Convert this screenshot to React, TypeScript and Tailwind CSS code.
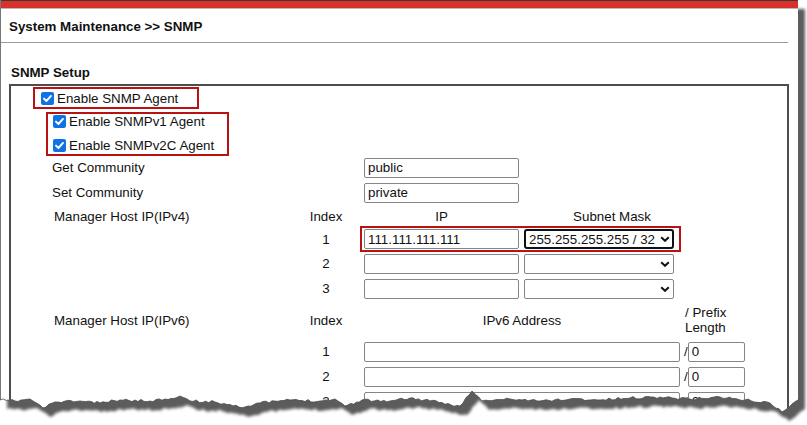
import React from 'react';

// Torn bottom edge of the screenshot: key points, jittered in between
const tearKeys: [number, number][] = [
  [0, 400], [15, 401], [30, 399], [43, 408], [55, 402], [80, 401], [100, 403], [120, 400],
  [150, 401], [165, 399], [180, 396], [190, 401], [215, 402], [245, 407], [260, 403],
  [290, 400], [320, 401], [335, 399], [345, 406], [362, 400], [390, 401], [410, 398],
  [430, 401], [460, 406], [472, 391], [482, 401], [510, 399], [540, 401], [570, 399],
  [600, 400], [630, 398], [660, 397], [690, 399], [720, 397], [745, 400], [770, 403],
  [782, 412], [792, 404], [798, 400],
];

function buildTear() {
  let seed = 11;
  const rand = () => {
    seed = (seed * 16807) % 2147483647;
    return seed / 2147483647;
  };
  const pts: [number, number][] = [];
  for (let i = 0; i < tearKeys.length - 1; i++) {
    const [x0, y0] = tearKeys[i];
    const [x1, y1] = tearKeys[i + 1];
    const steps = Math.max(1, Math.round((x1 - x0) / 3));
    for (let s = 0; s < steps; s++) {
      const t = s / steps;
      const jitter = s === 0 ? 0 : (rand() - 0.5) * 2.6;
      pts.push([x0 + (x1 - x0) * t, y0 + (y1 - y0) * t + jitter]);
    }
  }
  pts.push(tearKeys[tearKeys.length - 1]);
  return pts;
}

const tear = buildTear();
const tearPath = 'M' + tear.map(([x, y]) => `${x.toFixed(1)},${y.toFixed(1)}`).join(' L');
const pagePath =
  'M0,0 L798,0 ' +
  [...tear].reverse().map(([x, y]) => `L${x.toFixed(1)},${y.toFixed(1)}`).join(' ') +
  ' Z';

function Check() {
  return (
    <span className="flex w-[13px] h-[13px] shrink-0 items-center justify-center rounded-[2px] bg-[#1172e6]">
      <svg width="13" height="13" viewBox="0 0 13 13">
        <path d="M3 6.6 L5.4 9 L10 3.9" stroke="#fff" strokeWidth="1.9" fill="none" strokeLinecap="round" strokeLinejoin="round" />
      </svg>
    </span>
  );
}

function TextBox({ value = '', width }: { value?: string; width: string }) {
  return (
    <input
      readOnly
      value={value}
      className={`${width} h-[20px] shrink-0 rounded-[2px] border border-[#858585] bg-white px-[3px] text-[13.33px] text-[#111] outline-none`}
    />
  );
}

function Chevron() {
  return (
    <svg width="10" height="6" viewBox="0 0 10 6">
      <path d="M1.2 1.2 L5 4.8 L8.8 1.2" stroke="#111" strokeWidth="2" fill="none" />
    </svg>
  );
}

function MaskSelect({ value, focused }: { value?: string; focused?: boolean }) {
  return focused ? (
    <div className="ml-[5px] flex h-[20px] w-[150px] shrink-0 items-center justify-between rounded-[3px] border-2 border-[#111] bg-white pl-[3px] pr-[2px]">
      <span className="whitespace-nowrap">{value}</span>
      <Chevron />
    </div>
  ) : (
    <div className="ml-[5px] flex h-[20px] w-[150px] shrink-0 items-center justify-end rounded-[2px] border border-[#858585] bg-white pr-[3px]">
      <Chevron />
    </div>
  );
}

export default function App() {
  return (
    <div className="relative h-[425px] w-[807px] overflow-hidden bg-white font-['Liberation_Sans',Arial,sans-serif] text-[13.33px] leading-[15px] text-[#111]">
      <div className="h-[425px] w-[798px] border-l border-[#777] bg-white">
        {/* Top bar */}
        <div className="h-px bg-[#3a3a3a]" />
        <div className="h-[7px] bg-[#d9302c]" />
        <div className="h-px bg-[#b8b8b8]" />

        <div className="pl-[8px] pt-[10px] font-bold">System Maintenance &gt;&gt; SNMP</div>
        <div className="mt-[8px] h-px w-[787px] bg-[#9a9a9a]" />

        <div className="mt-[22px] pl-[10px] font-bold">SNMP Setup</div>

        {/* Setup box */}
        <div className="ml-[8px] mt-[4px] h-[400px] w-[780px] border-2 border-[#4d4d4d]">
          {/* Enable SNMP Agent */}
          <div className="ml-[22px] mt-[1px] flex h-[22px] w-[166px] items-center gap-[3px] border-2 border-[#b81212] pl-[6px]">
            <Check />
            <span className="whitespace-nowrap">Enable SNMP Agent</span>
          </div>

          {/* v1 / v2C */}
          <div className="ml-[35px] mt-[3px] flex w-[183px] flex-col gap-[11px] border-2 border-[#b81212] pb-[2px] pl-[5px] pt-[1px]">
            <div className="flex h-[13px] items-center gap-[3px] whitespace-nowrap">
              <Check />
              <span>Enable SNMPv1 Agent</span>
            </div>
            <div className="flex h-[13px] items-center gap-[3px] whitespace-nowrap">
              <Check />
              <span>Enable SNMPv2C Agent</span>
            </div>
          </div>

          {/* Communities */}
          <div className="-mt-[1px] flex h-[25px] items-center">
            <div className="w-[353px] pl-[41px]">Get Community</div>
            <TextBox value="public" width="w-[155px]" />
          </div>
          <div className="flex h-[25px] items-center">
            <div className="w-[353px] pl-[41px]">Set Community</div>
            <TextBox value="private" width="w-[155px]" />
          </div>

          {/* IPv4 managers */}
          <div className="flex h-[22px] items-center">
            <div className="w-[289px] pl-[43px]">Manager Host IP(IPv4)</div>
            <div className="w-[52px] text-center">Index</div>
            <div className="ml-[12px] w-[155px] text-center">IP</div>
            <div className="ml-[5px] w-[176px] text-center">Subnet Mask</div>
          </div>
          <div className="flex h-[24px] items-center">
            <div className="w-[289px]" />
            <div className="w-[52px] text-center">1</div>
            <div className="ml-[8px] flex h-[26px] items-center border-2 border-[#b81212] pl-[2px] pr-[5px]">
              <TextBox value="111.111.111.111" width="w-[155px]" />
              <MaskSelect focused value="255.255.255.255 / 32" />
            </div>
          </div>
          {['2', '3'].map((n) => (
            <div key={n} className="flex h-[25px] items-center">
              <div className="w-[289px]" />
              <div className="w-[52px] text-center">{n}</div>
              <div className="ml-[12px] flex items-center">
                <TextBox width="w-[155px]" />
                <MaskSelect />
              </div>
            </div>
          ))}

          {/* IPv6 managers */}
          <div className="flex h-[38px] items-center">
            <div className="w-[289px] pl-[43px]">Manager Host IP(IPv6)</div>
            <div className="w-[52px] text-center">Index</div>
            <div className="ml-[12px] w-[316px] text-center">IPv6 Address</div>
            <div className="ml-[5px]">
              / Prefix
              <br />
              Length
            </div>
          </div>
          {['1', '2', '3'].map((n) => (
            <div key={n} className="flex h-[25px] items-center">
              <div className="w-[289px]" />
              <div className="w-[52px] text-center">{n}</div>
              <div className="ml-[12px] flex items-center">
                <TextBox width="w-[316px]" />
                <span className="ml-[4px]">/</span>
                <TextBox value="0" width="w-[57px]" />
              </div>
            </div>
          ))}
        </div>
      </div>

      {/* Torn edge and drop shadow */}
      <svg className="pointer-events-none absolute inset-0" width="807" height="425" viewBox="0 0 807 425">
        <defs>
          <clipPath id="outside">
            <path d={`M0,0 H807 V425 H0 Z ${pagePath}`} clipRule="evenodd" />
          </clipPath>
          <filter id="soft" x="-5%" y="-5%" width="110%" height="120%">
            <feGaussianBlur stdDeviation="1.4" />
          </filter>
        </defs>
        <g clipPath="url(#outside)">
          <rect width="807" height="425" fill="#fff" />
          <path d={pagePath} transform="translate(7,9)" fill="#5c5c5c" filter="url(#soft)" />
        </g>
        <path d={tearPath} fill="none" stroke="#4a4a4a" strokeWidth="0.8" />
      </svg>
    </div>
  );
}
